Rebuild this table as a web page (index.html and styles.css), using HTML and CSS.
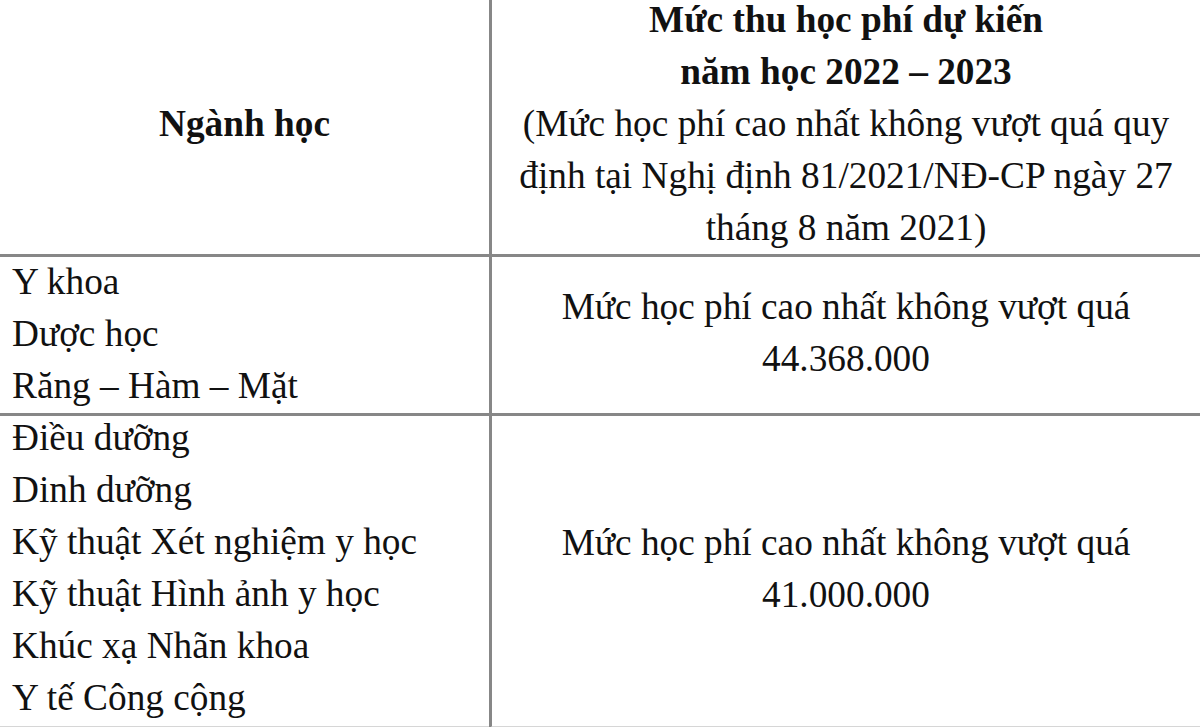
FILE: index.html
```html
<!DOCTYPE html>
<html lang="vi">
<head>
<meta charset="utf-8">
<title>Mức thu học phí dự kiến năm học 2022 – 2023</title>
<link rel="stylesheet" href="styles.css">
</head>
<body>
<div class="sheet">
  <div class="cell head left-col">
    <div class="center bold">Ngành học</div>
  </div>
  <div class="cell head right-col">
    <div class="center heading">
      <div class="bold">Mức thu học phí dự kiến</div>
      <div class="bold">năm học 2022 – 2023</div>
      <div>(Mức học phí cao nhất không vượt quá quy</div>
      <div>định tại Nghị định 81/2021/NĐ-CP ngày 27</div>
      <div>tháng 8 năm 2021)</div>
    </div>
  </div>

  <div class="cell left-col row-one">
    <ul class="majors">
      <li>Y khoa</li>
      <li>Dược học</li>
      <li>Răng – Hàm – Mặt</li>
    </ul>
  </div>
  <div class="cell right-col mid">
    <div class="center fee">
      <div>Mức học phí cao nhất không vượt quá</div>
      <div>44.368.000</div>
    </div>
  </div>

  <div class="cell left-col row-two last">
    <ul class="majors">
      <li>Điều dưỡng</li>
      <li>Dinh dưỡng</li>
      <li>Kỹ thuật Xét nghiệm y học</li>
      <li>Kỹ thuật Hình ảnh y học</li>
      <li>Khúc xạ Nhãn khoa</li>
      <li>Y tế Công cộng</li>
    </ul>
  </div>
  <div class="cell right-col mid last">
    <div class="center fee">
      <div>Mức học phí cao nhất không vượt quá</div>
      <div>41.000.000</div>
    </div>
  </div>
</div>
</body>
</html>
```

FILE: styles.css
```css
html, body {
  margin: 0;
  padding: 0;
  background: #ffffff;
  overflow: hidden;
}

body {
  font-family: "Liberation Serif", "Times New Roman", serif;
  font-size: 37.3px;
  line-height: 52px;
  color: #111111;
}

.sheet {
  width: 1200px;
  margin-top: -6px;
  display: grid;
  grid-template-columns: 489px 1fr;
}

.cell {
  border-bottom: 3px solid #878787;
  display: flex;
  flex-direction: column;
  white-space: nowrap;
}

.cell.last {
  border-bottom-color: #d6d6d6;
}

.right-col {
  border-left: 3px solid #878787;
}

.head,
.mid {
  justify-content: center;
  align-items: center;
}

.center {
  text-align: center;
}

.bold {
  font-weight: bold;
}

.fee {
  padding-bottom: 4px;
}

.majors {
  list-style: none;
  margin: 0;
  padding: 0 0 0 12px;
}

.row-one {
  padding-bottom: 1px;
}

.row-one .majors {
  margin-top: -1px;
}

.row-two {
  padding-bottom: 2px;
}

.row-two .majors {
  margin-top: -4px;
}
```
